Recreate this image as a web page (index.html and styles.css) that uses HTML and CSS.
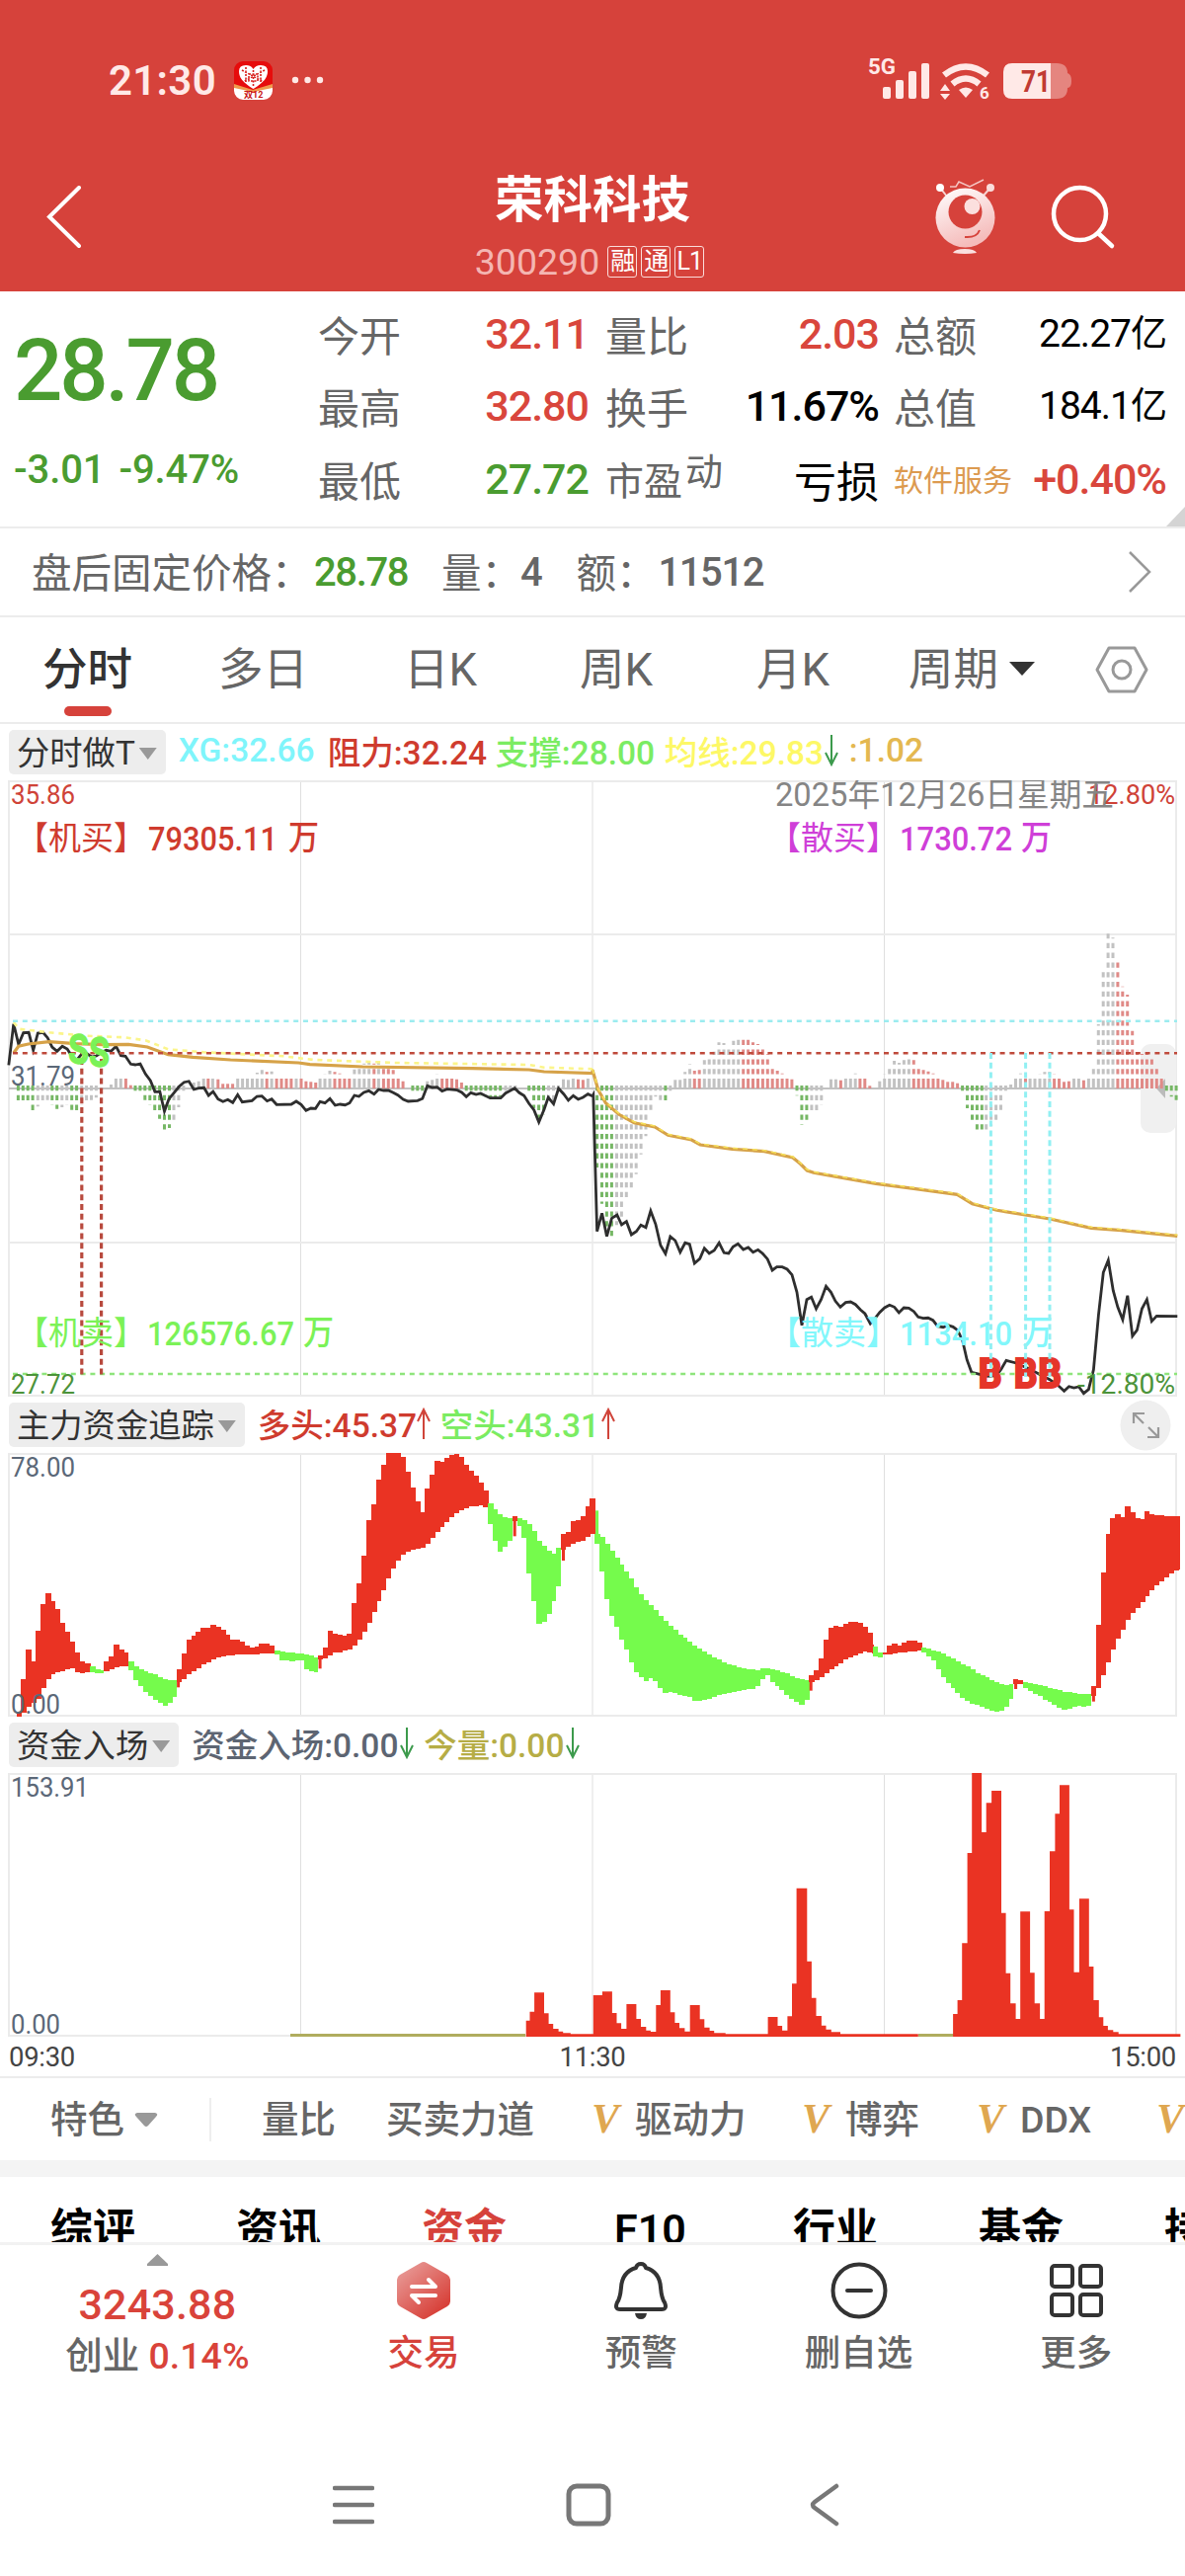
FILE: index.html
```html
<!DOCTYPE html>
<html lang="zh-CN">
<head>
    <meta charset="UTF-8">
    <meta name="viewport" content="width=device-width, initial-scale=1.0">
    <title>荣科科技 300290</title>
    <link rel="stylesheet" href="styles.css">
</head>
<body>
    <header>
        <div class="status">
            <span class="clock">21:30</span>
            <svg class="app" width="39" height="39" viewBox="0 0 39 39">
                <rect width="39" height="39" rx="9" fill="#e60c0c"/>
                <path d="M0 24l19 8 20-8v6a9 9 0 0 1-9 9H9a9 9 0 0 1-9-9z" fill="#fff"/>
                <path d="M0 23l19 6 20-6v4l-20 4-19-4z" fill="#f09a4c"/>
                <path d="M19.500 28C8 21 5 16 5 10q0-6 7-6 5 0 7.500 4Q22 4 27 4q7 0 7 6c0 6-3 11-14.500 18z" fill="#fff"/>
                <path d="M8 9l22 12M31 9L9 21M12 6v15M27 6v15M19.500 9v17M15 13h9v7h-9z" stroke="#d8201c" stroke-width="1.600" stroke-dasharray="2 1.500" fill="none"/>
                <text x="10" y="37" font-size="9" font-weight="700" fill="#c81414">双12</text>
            </svg>
            <svg class="more" width="34" height="8" viewBox="0 0 34 8" fill="#ffe9e7"><circle cx="4" cy="4" r="3.200"/><circle cx="16.500" cy="4" r="3.200"/><circle cx="29" cy="4" r="3.200"/></svg>
            <svg class="signal" width="208" height="46" viewBox="878 56 208 46" fill="#ffe9e7">
                <text x="879" y="74" font-size="22" font-weight="700" textLength="28" lengthAdjust="spacingAndGlyphs">5G</text>
                <rect x="894" y="87" width="8" height="12" rx="2"/>
                <rect x="907" y="80" width="8" height="19" rx="2"/>
                <rect x="920" y="71" width="8" height="28" rx="2"/>
                <rect x="933" y="63" width="8" height="36" rx="2"/>
                <path d="M956 75q22-17 44 0M964.500 84q13.500-11 27 0" fill="none" stroke="#ffe9e7" stroke-width="6.500"/>
                <path d="M978 98l-7-8q7-5 14 0z"/>
                <path d="M957 84l5 7h-10zM957 100l-5-6h10z"/>
                <text x="992" y="99" font-size="17" font-weight="700">6</text>
                <path d="M1016 72q0-9 9-9h39v36h-39q-9 0-9-9z"/>
                <path d="M1064 63h6q11 0 11 10 4 1 4 8t-4 7q0 11-11 11h-6z" fill="#e5857f"/>
                <text x="1034" y="92" font-size="31" font-weight="700" fill="#c13a33" textLength="30" lengthAdjust="spacingAndGlyphs">71</text>
            </svg>
        </div>
        <div class="title">
            <svg class="back" width="36" height="64" viewBox="0 0 36 64"><path d="M33 2L3 31.500 33 61" fill="none" stroke="#fff" stroke-width="4" stroke-linecap="round"/></svg>
            <div class="name">
                <h1>荣科科技</h1>
                <p><span class="code">300290</span><i>融</i><i>通</i><i>L1</i></p>
            </div>
            <svg class="robot" width="62" height="78" viewBox="946 180 62 78">
                <defs><linearGradient id="face" x1="0" y1="0" x2=".4" y2="1"><stop offset="0" stop-color="#fff"/><stop offset="1" stop-color="#f5bcbb"/></linearGradient></defs>
                <path d="M952 190l7 9M1003 190l-8 9" stroke="#f8d5d3" stroke-width="2"/>
                <circle cx="952" cy="190" r="4" fill="#fff"/><circle cx="1003" cy="190" r="4" fill="#fadddc"/>
                <path d="M962 189h6l3-5 11 5 14-7" fill="none" stroke="#f5c4c1" stroke-width="1.500"/>
                <circle cx="977.500" cy="220.500" r="30" fill="url(#face)"/>
                <circle cx="977.500" cy="214.500" r="17" fill="#d6423b"/>
                <circle cx="984.500" cy="209" r="8" fill="#fbdfde"/>
                <path d="M977 240q12 1 15-7" fill="none" stroke="#d6423b" stroke-width="2"/>
                <path d="M965 256q2-4 12-4t12 4q-12 2-24 0z" fill="#fae0df"/>
            </svg>
            <svg class="search" width="66" height="66" viewBox="1064 187 66 66" fill="none" stroke="#fff" stroke-width="4.500" stroke-linecap="round"><circle cx="1093.500" cy="216.500" r="26.500"/><path d="M1112 236l14 13"/></svg>
        </div>
    </header>

    <section class="quote">
        <div class="price">
            <strong>28.78</strong>
            <p><span>-3.01</span><span>-9.47%</span></p>
        </div>
        <div class="stats">
            <label>今开</label><b class="red">32.11</b><label>量比</label><b class="red">2.03</b><label>总额</label><b class="sm">22.27<i>亿</i></b>
            <label>最高</label><b class="red">32.80</b><label>换手</label><b>11.67%</b><label>总值</label><b class="sm">184.1<i>亿</i></b>
            <label>最低</label><b class="green">27.72</b><label class="pe">市盈<sup>动</sup></label><b class="cn">亏损</b><label class="sector">软件服务</label><b class="red">+0.40%</b>
        </div>
        <svg class="corner" width="19" height="20" viewBox="0 0 19 20"><path d="M19 0v20H0z" fill="#d4d4d4"/></svg>
    </section>

    <section class="after">
        <span class="lead">盘后固定价格：</span><b class="green">28.78</b>
        <span class="vol">量：</span><b>4</b>
        <span class="amt">额：</span><b>11512</b>
        <svg width="24" height="44" viewBox="0 0 24 44"><path d="M2 2l20 20L2 42" fill="none" stroke="#999" stroke-width="2.500"/></svg>
    </section>

    <nav class="periods">
        <a class="on">分时</a><a>多日</a><a>日K</a><a>周K</a><a>月K</a><a>周期<svg width="26" height="14" viewBox="0 0 26 14"><path d="M0 0h26L13 14z" fill="#333"/></svg></a>
        <svg class="gear" width="54" height="48" viewBox="0 0 54 48" fill="none" stroke="#999" stroke-width="3"><path d="M14 2h26l12 22-12 22H14L2 24z" stroke-linejoin="round"/><circle cx="27" cy="24" r="9"/></svg>
    </nav>

    <div class="indicator first">
        <span class="chip">分时做T<i></i></span>
        <span class="cyan w1">XG:32.66</span><span class="crimson w2">阻力:32.24</span><span class="lime w3">支撑:28.00</span><span class="yellow w4">均线:29.83</span><svg class="down" viewBox="0 0 14 32"><path d="M7 0v30M1 18l6 12 6-12"/></svg><span class="gold w5">:1.02</span>
    </div>
    <svg class="chart" id="price" width="1200" height="624" viewBox="0 790 1200 624"></svg>

    <div class="indicator">
        <span class="chip">主力资金追踪<i></i></span>
        <span class="crimson w6">多头:45.37</span><svg class="up" viewBox="0 0 14 32"><path d="M7 32V2M1 14L7 2l6 12"/></svg><span class="lime w7">空头:43.31</span><svg class="up" viewBox="0 0 14 32"><path d="M7 32V2M1 14L7 2l6 12"/></svg>
        <svg class="expand" width="52" height="52" viewBox="0 0 52 52"><circle cx="26" cy="26" r="25.500" fill="#efefef"/><path d="M14 24V14h11M14 14l10 10M39 28v10H28M39 38L29 28" fill="none" stroke="#999" stroke-width="2.200"/></svg>
    </div>
    <svg class="chart" id="funds" width="1200" height="267" viewBox="0 1471 1200 267"></svg>

    <div class="indicator">
        <span class="chip">资金入场<i></i></span>
        <span class="slate w8">资金入场:0.00</span><svg class="down" viewBox="0 0 14 32"><path d="M7 0v30M1 18l6 12 6-12"/></svg><span class="olive w9">今量:0.00</span><svg class="down" viewBox="0 0 14 32"><path d="M7 0v30M1 18l6 12 6-12"/></svg>
    </div>
    <svg class="chart" id="inflow" width="1200" height="267" viewBox="0 1795 1200 267"></svg>
    <div class="axis"><span>09:30</span><span>11:30</span><span>15:00</span></div>

    <div class="features">
        <span class="pick">特色<svg width="24" height="14" viewBox="0 0 24 14"><path d="M3 0h18q4 1 1 4l-8 9q-2 2-4 0L2 4Q-1 1 3 0z" fill="#999"/></svg></span>
        <span class="f1">量比</span><span class="f2">买卖力道</span>
        <span class="f3"><em>V</em>驱动力</span><span class="f4"><em>V</em>博弈</span><span class="f5"><em>V</em>DDX</span><span class="f6"><em>V</em></span>
    </div>

    <nav class="sections">
        <a>综评</a><a>资讯</a><a class="on">资金</a><a>F10</a><a>行业</a><a>基金</a><a>持仓</a>
    </nav>

    <footer>
        <div class="index">
            <svg width="21" height="12" viewBox="0 0 21 12"><path d="M10.500 0L21 10v2H0v-2z" fill="#999"/></svg>
            <strong>3243.88</strong>
            <p>创业 <b>0.14%</b></p>
        </div>
        <div class="action trade">
            <svg width="60" height="60" viewBox="0 0 60 60">
                <defs><linearGradient id="hex" x1="0" y1="0" x2=".8" y2="1"><stop offset="0" stop-color="#eaa5a2"/><stop offset="1" stop-color="#d6372f"/></linearGradient></defs>
                <path d="M27 2q3-2 6 0l21 12q3 2 3 5v22q0 3-3 5L33 58q-3 2-6 0L6 46q-3-2-3-5V19q0-3 3-5z" fill="url(#hex)"/>
                <path d="M18 26h24L35 19M42 35H18l7 7" fill="none" stroke="#fff" stroke-width="4" stroke-linecap="round" stroke-linejoin="round"/>
            </svg>
            <span>交易</span>
        </div>
        <div class="action">
            <svg width="60" height="60" viewBox="0 0 60 60" fill="none" stroke="#333" stroke-width="4" stroke-linejoin="round">
                <path d="M30 3q-4 0-5 4-14 4-15 20-1 11-4 15-3 7 3 7h42q6 0 3-7-3-4-4-15Q49 11 35 7q-1-4-5-4z"/><path d="M24 53h12q-1 6-6 6t-6-6z" fill="#333" stroke="none"/>
            </svg>
            <span>预警</span>
        </div>
        <div class="action">
            <svg width="60" height="60" viewBox="0 0 60 60" fill="none" stroke="#333" stroke-width="4" stroke-linecap="round"><circle cx="30" cy="30" r="26.500"/><path d="M18 30h24"/></svg>
            <span>删自选</span>
        </div>
        <div class="action">
            <svg width="60" height="60" viewBox="0 0 60 60" fill="none" stroke="#333" stroke-width="4"><rect x="5" y="5" width="21" height="21" rx="3"/><rect x="34" y="5" width="21" height="21" rx="3"/><rect x="5" y="34" width="21" height="21" rx="3"/><rect x="34" y="34" width="21" height="21" rx="3"/></svg>
            <span>更多</span>
        </div>
    </footer>

    <div class="sysnav">
        <svg width="42" height="44" viewBox="0 0 42 44"><path d="M2 5h38M2 22h38M2 39h38" stroke="#777" stroke-width="4.500" stroke-linecap="round"/></svg>
        <svg width="46" height="44" viewBox="0 0 46 44"><rect x="3" y="3" width="40" height="38" rx="8" fill="none" stroke="#777" stroke-width="5"/></svg>
        <svg width="30" height="44" viewBox="0 0 30 44"><path d="M27 3L5 19q-4 3 0 6l22 16" fill="none" stroke="#777" stroke-width="4.500" stroke-linecap="round"/></svg>
    </div>
    <script src="chart.js"></script>
</body>
</html>
```
FILE: styles.css
```css
* {
    box-sizing: border-box;
}
body {
    margin: 0;
    width: 1200px;
    height: 2608px;
    overflow: hidden;
    background: #fff;
    color: #666;
    font-family: Roboto, "Noto Sans CJK SC", sans-serif;
}
svg {
    display: block;
    flex: none;
}
i, em {
    font-style: normal;
}
h1, p {
    margin: 0;
}
.red { color: #d9463c; }
.green { color: #4a9c30; }
.cyan { color: #7ff5fb; }
.crimson { color: #cf3b2e; }
.lime { color: #7bec62; }
.yellow { color: #fdf866; }
.gold { color: #e4b850; }
.slate { color: #5d6572; }
.olive { color: #b6ad46; }

/* header */
header {
    height: 295px;
    background: #d6423b;
    color: #fff;
}
.status {
    display: flex;
    align-items: center;
    height: 162px;
    padding-left: 110px;
}
.clock {
    width: 127px;
    font-size: 42px;
    font-weight: 600;
    color: #ffe9e7;
    letter-spacing: 0.3px;
}
.more {
    margin-left: 19px;
}
.signal {
    margin-left: 549px;
    margin-top: -3px;
}
.title {
    display: flex;
    height: 133px;
    padding-left: 47px;
}
.back {
    margin-top: 26px;
}
.name {
    width: 280px;
    margin-left: 377px;
    text-align: center;
    padding-top: 10px;
}
.name h1 {
    font-size: 49.5px;
    line-height: 62px;
    font-weight: 700;
    margin-left: 0;
}
.name p {
    display: flex;
    justify-content: center;
    align-items: center;
    gap: 4px;
    height: 34px;
    margin: 14px 0 0 -43px;
    width: 360px;
}
.code {
    font-size: 37.5px;
    color: #f4b6b2;
    margin-right: 4px;
}
.name i {
    width: 30px;
    height: 32px;
    border: 1.5px solid #fbdcda;
    border-radius: 3px;
    font-size: 25px;
    line-height: 29px;
    letter-spacing: -1px;
}
.robot {
    margin: 18px 0 0 206px;
}
.search {
    margin: 25px 0 0 56px;
}

/* quote */
.quote {
    position: relative;
    display: flex;
    height: 240px;
    border-bottom: 2px solid #ececec;
}
.price {
    width: 322px;
    padding-left: 14px;
    color: #4a9c30;
}
.price strong {
    display: block;
    font-size: 87px;
    line-height: 100px;
    font-weight: 500;
    letter-spacing: -3.2px;
    margin-top: 30px;
}
.price p {
    display: flex;
    gap: 14px;
    margin-top: 27px;
    font-size: 40px;
    line-height: 48px;
    font-weight: 500;
    letter-spacing: -0.1px;
}
.stats {
    display: grid;
    grid-template-columns: 90px 184px 17px 90px 187px 15px 120px 156px;
    grid-template-rows: repeat(3, 73.5px);
    align-items: center;
    padding-top: 6px;
    font-size: 42px;
}
.stats label {
    margin-top: -1px;
}
.stats label:nth-of-type(3n+2) { grid-column: 4; }
.stats label:nth-of-type(3n) { grid-column: 7; }
.stats b {
    font-weight: 500;
    font-size: 43px;
    letter-spacing: -1px;
    text-align: right;
    white-space: nowrap;
}
.stats b:not(.red):not(.green) { color: #000; }
.stats b.sm {
    font-size: 39px;
    font-weight: 400;
}
.stats .sm i {
    font-size: 37px;
    line-height: 1;
}
.stats .cn {
    font-weight: 400;
    font-size: 43px;
    letter-spacing: 0;
}
.stats .pe {
    font-size: 39px;
    white-space: nowrap;
}
.pe sup {
    position: relative;
    top: -10px;
    font-size: 38px;
    line-height: 1;
    vertical-align: baseline;
    margin-left: 3px;
}
.stats .sector {
    font-size: 30px;
    color: #dc9a50;
    white-space: nowrap;
}
.corner {
    position: absolute;
    right: 0;
    bottom: 0;
}

.after {
    display: flex;
    align-items: center;
    height: 90px;
    padding-left: 32px;
    border-bottom: 2px solid #ececec;
    font-size: 40.5px;
    white-space: nowrap;
}
.after span {
    margin-top: -3px;
}
.after b {
    font-weight: 500;
    font-size: 40px;
    letter-spacing: -1.4px;
}
.after .lead { width: 286px; }
.after .vol { margin-left: 34px; width: 80px; }
.after .amt { margin-left: 35px; width: 83px; }
.after svg { margin-left: auto; margin-right: 34px; }

/* period tabs */
.periods {
    display: flex;
    align-items: center;
    height: 108px;
    border-bottom: 2px solid #ececec;
    font-size: 45.5px;
    padding-left: 43px;
    white-space: nowrap;
}
.periods a {
    position: relative;
    top: -4px;
    width: 178px;
}
.periods a:nth-of-type(2) { width: 188px; }
.periods a:nth-of-type(3) { width: 178px; }
.periods a:nth-of-type(4) { width: 179px; }
.periods a:nth-of-type(5) { width: 154px; }
.periods a:nth-of-type(6) {
    display: flex;
    align-items: center;
    gap: 11px;
    width: 189px;
}
.periods a svg { margin-top: 5px; }
.periods .on {
    color: #333;
    font-weight: 500;
}
.periods .on::after {
    content: "";
    position: absolute;
    left: 22px;
    bottom: -18px;
    width: 48px;
    height: 10px;
    border-radius: 5px;
    background: #d6423b;
}

/* indicator rows */
.indicator {
    display: flex;
    align-items: center;
    height: 57px;
    padding-left: 9px;
    font-size: 33.5px;
    font-weight: 500;
    white-space: nowrap;
}
.indicator > span:not(.chip) {
    margin-top: -5px;
}
.chip {
    display: flex;
    align-items: center;
    height: 45px;
    padding: 0 9px 5px 8px;
    margin: 0 13px 0 0;
    border-radius: 5px;
    background: #ededed;
    color: #333;
    font-size: 33.3px;
    font-weight: 400;
}
.chip i {
    width: 18px;
    height: 12px;
    margin: 8px 0 0 4px;
    background: #999;
    clip-path: polygon(0 0, 100% 0, 50% 100%);
}
.first .w1 { width: 151px; }
.first .w2 { width: 170px; }
.first .w3 { width: 171px; }
.first .w4 { width: 162px; }
.first .w5 { margin-left: 11px; }
.w6 { width: 161px; }
.w7 { width: 163px; margin-left: 10px; }
.w8 { width: 211px; margin-left: 0; }
.w9 { width: 144px; margin-left: 10px; }
.up, .down {
    width: 14px;
    height: 32px;
    margin-top: -3px;
    fill: none;
    stroke: #d0443a;
    stroke-width: 2;
}
.down { stroke: #3c9a4c; }
.expand { margin-left: auto; margin-right: 14px; }
.axis {
    display: flex;
    justify-content: space-between;
    height: 42px;
    padding: 4px 9px;
    border-bottom: 2px solid #ececec;
    font-size: 27.5px;
    letter-spacing: -0.3px;
    color: #444;
}
.chart text { font-size: 28px; }
.chart .big { font-size: 33px; }
.chart .mid { font-size: 34px; font-weight: 500; }
.chart .mark { font-size: 38px; }

/* features */
.features {
    display: flex;
    align-items: center;
    height: 83px;
    font-size: 37.5px;
    font-weight: 500;
    padding-left: 51px;
    white-space: nowrap;
    overflow: hidden;
}
.features span {
    flex: none;
    line-height: 46px;
}
.features em {
    display: inline-block;
    width: 44px;
    font-family: "Liberation Serif", serif;
    font-size: 42px;
    line-height: 1;
    font-style: italic;
    font-weight: 700;
    color: #dfa750;
}
.pick {
    display: flex;
    align-items: center;
    gap: 10px;
    width: 163px;
    height: 44px;
    border-right: 2px solid #eee;
    margin-right: 51px;
}
.f1 { width: 126px; }
.f2 { width: 208px; }
.f3 { width: 213px; }
.f4 { width: 177px; }
.f5 { width: 182px; }

.sections {
    display: flex;
    height: 83px;
    padding: 25px 0 0 51px;
    border-top: 17px solid #f4f4f4;
    overflow: hidden;
    color: #000;
    font-size: 43px;
    line-height: 56px;
    font-weight: 600;
    white-space: nowrap;
}
.sections a {
    flex: none;
    width: 188px;
}
.sections a:nth-child(4) { padding-left: 7px; }
.sections .on { color: #d6423b; }

/* bottom bar */
footer {
    display: flex;
    position: relative;
    height: 148px;
    border-top: 3px solid #f2f2f2;
    background: #fff;
}
.index {
    width: 319px;
    padding-top: 9px;
    text-align: center;
}
.index svg { margin: 0 auto; }
.index strong {
    display: block;
    font-size: 43px;
    line-height: 50px;
    font-weight: 500;
    color: #d9433a;
    margin-top: 14px;
    letter-spacing: 0.2px;
}
.index p {
    font-size: 37.5px;
    line-height: 54px;
    white-space: nowrap;
    font-weight: 500;
}
.index b {
    color: #d9433a;
    font-weight: 500;
}
.action {
    width: 220.5px;
    padding-top: 16px;
    text-align: center;
    font-size: 36.5px;
    line-height: 52px;
    font-weight: 500;
}
.action svg { margin: 0 auto; }
.action span {
    display: block;
    margin-top: 8px;
}
.trade { color: #d6423b; }

.sysnav {
    display: flex;
    align-items: center;
    padding: 96px 0 0 337px;
}
.sysnav svg:nth-child(2) { margin-left: 194px; }
.sysnav svg:nth-child(3) { margin-left: 201px; }
```
FILE: chart.js
```javascript
// Session halves: each is 600px wide and its samples are stored 1568 units across
const UX = 600 / 1568;
const STEP = 12.87; // one minute
const GRID = '#dfdfdf', RED = '#ea3323', GREEN = '#75fb4c';

function px(half, x) { return (half * 600 + x * UX).toFixed(1); }

function line(half, top, pts) {
    return pts.map(p => px(half, p[0]) + ',' + (top + p[1] / 3).toFixed(1)).join(' ');
}

function frame(top, bottom, rows) {
    let s = '';
    [304.5, 600, 895.5].forEach(x => s += `<path d="M${x} ${top}V${bottom}" stroke="${GRID}" stroke-width="1"/>`);
    rows.forEach(y => s += `<path d="M9 ${y}H1191" stroke="#ebebeb" stroke-width="2"/>`);
    return s + `<rect x="9" y="${top + 1}" width="1182" height="${bottom - top - 2}" fill="none" stroke="#ebebeb" stroke-width="2"/>`;
}

function label(x, y, w, color, text, cls) {
    return `<text x="${x}" y="${y}" fill="${color}" textLength="${w}" lengthAdjust="spacingAndGlyphs" class="${cls || ''}">${text}</text>`;
}

// ---------- price ----------
const am = [[23,475],[36,350],[49,412],[62,377],[76,376],[88,430],[100,378],[114,376],[126,392],[138,420],[151,433],[165,418],[178,426],[190,448],[203,460],[217,440],[230,440],[242,450],[255,447],[268,437],[281,430],[294,433],[307,418],[320,446],[332,448],[346,472],[358,474],[371,471],[385,502],[398,522],[410,556],[423,556],[435,615],[447,578],[460,560],[474,540],[487,527],[500,524],[513,549],[526,545],[540,544],[552,567],[564,555],[577,578],[590,586],[603,580],[616,589],[629,565],[641,587],[667,583],[680,570],[693,569],[707,584],[719,578],[732,595],[771,594],[784,585],[797,595],[810,613],[823,606],[835,607],[847,586],[860,590],[873,577],[887,597],[900,594],[913,596],[925,590],[938,567],[950,570],[963,558],[976,553],[990,563],[1002,549],[1015,552],[1028,552],[1041,559],[1053,566],[1067,579],[1080,585],[1105,583],[1118,577],[1131,538],[1144,543],[1157,542],[1170,554],[1183,548],[1210,551],[1222,558],[1234,571],[1246,559],[1260,564],[1272,561],[1297,575],[1325,575],[1338,560],[1350,553],[1362,545],[1374,559],[1387,568],[1400,592],[1413,611],[1426,648],[1440,610],[1451,573],[1465,593],[1478,546],[1492,563],[1504,582],[1517,568],[1530,579],[1543,573],[1556,563],[1568,569]];
const pm = [[2,565],[12,980],[25,925],[38,995],[51,940],[65,930],[77,960],[90,950],[103,990],[116,980],[128,961],[141,968],[154,918],[167,958],[180,1022],[193,1048],[206,996],[219,1008],[232,1043],[245,1015],[257,1019],[270,1077],[284,1063],[296,1031],[309,1047],[322,1038],[335,1015],[348,1045],[360,1047],[372,1027],[385,1018],[399,1035],[412,1029],[425,1043],[438,1036],[450,1047],[463,1064],[476,1098],[488,1088],[502,1088],[515,1095],[528,1112],[541,1165],[554,1265],[567,1187],[579,1180],[592,1215],[605,1187],[618,1147],[631,1165],[643,1192],[656,1210],[670,1196],[683,1194],[696,1202],[709,1218],[721,1230],[735,1260],[747,1245],[760,1226],[773,1212],[786,1204],[799,1210],[811,1227],[824,1212],[837,1213],[850,1223],[862,1240],[875,1244],[888,1243],[901,1250],[913,1268],[928,1271],[941,1265],[954,1270],[966,1280],[979,1310],[991,1370],[1003,1408],[1017,1412],[1044,1420],[1069,1418],[1082,1398],[1095,1372],[1121,1380],[1160,1400],[1210,1430],[1234,1450],[1248,1465],[1261,1451],[1274,1455],[1287,1452],[1300,1472],[1313,1460],[1326,1400],[1339,1235],[1352,1105],[1365,1068],[1378,1160],[1390,1210],[1403,1248],[1416,1175],[1429,1298],[1441,1280],[1454,1215],[1467,1187],[1480,1253],[1493,1237],[1548,1238]];
const avgAm = [[36,438],[49,418],[75,411],[130,404],[200,410],[270,413],[340,412],[390,420],[445,443],[510,451],[610,459],[790,468],[820,473],[960,480],[1250,485],[1400,489],[1440,495],[1568,500]];
const avgPm = [[0,490],[15,550],[35,590],[70,625],[110,650],[165,663],[200,688],[262,702],[285,717],[370,730],[455,737],[530,756],[550,775],[568,795],[585,802],[650,815],[750,835],[850,850],[965,868],[1005,896],[1070,916],[1210,942],[1320,970],[1400,977],[1548,994]];
const maAm = [[36,345],[50,365],[130,376],[230,386],[330,391],[385,400],[445,427],[540,436],[750,448],[830,459],[1050,468],[1400,474],[1440,482],[1568,487]];

// momentum bars: half, first x, colour, heights per minute
const G = '#76b765', S = '#c2c2c2', R = '#e08a87';
const bars = [
    [0,48,G,[-42,-42,-42,-75]],[0,100,S,[-55,-40,-35]],[0,138,G,[-50,-62]],[0,164,S,[-57,-50]],[0,190,G,[-65,-72]],[0,216,S,[-50,-42,-35,-28]],
    [0,294,S,[12,40,30]],[0,333,R,[30,10]],[0,358,G,[-14,-17,-35,-50,-78,-92,-133,-120]],[0,460,S,[-98,-57,-20]],
    [0,513,S,[18,22,40]],[0,551,R,[38]],[0,563,S,[35]],[0,577,R,[28,14,14,14]],[0,629,S,[32,30,32,34,48,56]],[0,706,R,[50]],[0,719,S,[52]],
    [0,732,R,[42,36,32,32]],[0,784,S,[30]],[0,797,R,[36,22,20,18]],[0,847,S,[36,44,54]],[0,886,R,[50,46,42,42]],[0,938,S,[58,70,76,78]],
    [0,990,R,[76]],[0,1002,S,[78]],[0,1015,R,[70,70,56,40,22]],[0,1092,G,[-12,-14,-15]],[0,1131,S,[22,26,44]],[0,1170,R,[34,33,33,28,18]],
    [0,1234,G,[-14,-16,-20,-22,-25,-26,-28,-24]],[0,1338,S,[-18,-14,-12]],[0,1400,G,[-20,-60,-90,-80]],[0,1452,S,[-45,-40,-15]],
    [0,1491,S,[28,26,30]],[0,1530,R,[28,26]],[0,1556,S,[30]],
    [1,12,G,[-240,-350,-455,-455]],[1,64,S,[-415,-390,-340,-310,-260,-200,-145,-65,-25,-35]],[1,193,G,[-45]],[1,206,S,[-8]],[1,219,S,[26,26,50,74]],
    [1,270,R,[54,56]],[1,296,S,[86,96,112,140,138,130,145,158]],[1,399,R,[153,153,140,135,128,104,68,54,46,38,28]],[1,541,G,[-22,-110,-98]],
    [1,580,S,[-78,-78,-50]],[1,631,S,[28,28]],[1,657,R,[25]],[1,670,S,[36,42,46]],[1,708,R,[42,32,8]],[1,760,S,[22,44,72,84,78,86,92]],
    [1,850,R,[86,66,56,52,46,30,26,20,20,16]],[1,979,G,[-14,-60,-108,-136,-138]],[1,1042,S,[-130,-115,-100,-65,-20]],[1,1107,S,[12,40,46]],
    [1,1146,R,[38]],[1,1158,S,[34,40,44,50,50]],[1,1222,R,[44,34,20,22]],[1,1274,S,[30,30]],[1,1300,R,[25]],[1,1313,S,[32,68,195,360,470,458]],
    [1,1390,R,[395,310,285,175,110,105,108,100,60,30]],[1,1519,G,[-14,-25,-35]]
];

function drawPrice() {
    let s = frame(790, 1414, [946, 1258]);
    s += '<path d="M9 1102H1184" stroke="#c2c2c2" stroke-width="2"/>';
    s += '<rect x="1155" y="1057" width="36" height="90" rx="10" fill="#f0f0f0"/><path d="M1180 1092v20l-9-10z" fill="#bbb"/>';
    bars.forEach(b => b[3].forEach((h, i) => {
        const x = px(b[0], b[1] + i * STEP);
        // first dash above the zero line is longer
        const dash = h > 0 ? '10' + ' 4.5 5.3'.repeat(16) + ' 4.5' : '5.3 4.5';
        s += `<path d="M${x} ${h > 0 ? 1102 : 1099}V${(1102 - h / 3).toFixed(1)}" stroke="${b[2]}" stroke-width="3" stroke-dasharray="${dash}"/>`;
    }));
    s += `<polyline points="${line(0, 920, am)} ${line(1, 920, pm)}" fill="none" stroke="#2e2e2e" stroke-width="2.8"/>`;
    s += `<polyline points="${line(0, 920, avgAm)} ${line(1, 920, avgPm)}" fill="none" stroke="#d6a248" stroke-width="3.2"/>`;
    s += `<polyline points="${line(0, 920, maAm)}" fill="none" stroke="#fbf58b" stroke-width="2.6" stroke-dasharray="5 4.8"/>`;
    s += `<polyline points="${line(1, 919, avgPm)}" fill="none" stroke="#f6e05a" stroke-width="1.6" stroke-dasharray="5 4.8"/>`;
    [[1033.7, '#9becef'], [1066.3, '#bf4a3c'], [1391, '#8fe57c']].forEach(r => {
        s += `<path d="M13 ${r[0]}H1192" stroke="${r[1]}" stroke-width="2.6" stroke-dasharray="5 4.8"/>`;
    });
    [82.8, 102.6].forEach(x => s += `<path d="M${x} 1072V1392" stroke="#b84a3e" stroke-width="3.2" stroke-dasharray="6 3.8"/>`);
    // text over the plot
    s += label(11, 814, 65, '#cf4338', '35.86') + label(1102, 814, 88, '#cf4338', '12.80%');
    s += label(785, 816, 343, '#858585', '2025年12月26日星期五', 'big');
    s += label(16, 860, 132, '#cf3b2e', '【机买】', 'big') + label(150, 861, 131, '#cf3b2e', '79305.11', 'mid') + label(292, 860, 31, '#cf3b2e', '万', 'mid');
    s += label(778, 860, 132, '#cf3fd8', '【散买】', 'big') + label(911, 861, 114, '#cf3fd8', '1730.72', 'mid') + label(1034, 860, 31, '#cf3fd8', '万', 'mid');
    s += label(16, 1361, 132, '#7bf257', '【机卖】', 'big') + label(149, 1362, 149, '#7bf257', '126576.67', 'mid') + label(307, 1361, 31, '#7bf257', '万', 'mid');
    s += label(778, 1361, 132, '#82f7fb', '【散卖】', 'big') + label(911, 1362, 114, '#82f7fb', '1134.10', 'mid') + label(1035, 1361, 31, '#82f7fb', '万', 'mid');
    s += label(11, 1099, 65, '#5b6878', '31.79') + label(11, 1411, 65, '#4c933a', '27.72') + label(1091, 1411, 99, '#4c933a', '-12.80%');
    // sell / buy marks
    [[70, 1076], [91, 1079]].forEach(p => s += `<text x="${p[0]}" y="${p[1]}" class="mark" textLength="19" lengthAdjust="spacingAndGlyphs" fill="none" stroke="#7bf257" stroke-width="3.400">S</text>`);
    [991, 1027, 1051.5].forEach(x => s += `<text x="${x}" y="1404" class="mark" font-weight="400" textLength="23" lengthAdjust="spacingAndGlyphs" fill="#d8d0ca" stroke="#e5352a" stroke-width="4">B</text>`);
    [1003.4, 1038.6, 1063].forEach(x => s += `<path d="M${x} 1066V1394" stroke="#92f0f3" stroke-width="3" stroke-dasharray="6 3.8"/>`);
    document.getElementById('price').innerHTML = s;
}

// ---------- fund tracking: half, colour, [x, top, bottom] ----------
const flow = [
    [0,RED,[[43,1003,1013],[56,900,1003],[69,808,985],[82,848,970],[95,750,960],[108,667,925],[120,637,900],[134,665,885],[147,690,880],[160,733,875],[173,760,870],[186,790,868],[200,825,880],[213,850,882],[238,853,876]]],
    [0,GREEN,[[238,862,880],[250,868,883],[262,873,882],[274,875,880]]],
    [0,RED,[[275,845,875],[287,835,870],[300,795,865],[313,810,862],[326,818,862],[340,820,862]]],
    [0,GREEN,[[340,845,872],[352,860,900],[365,870,920],[378,875,938],[390,880,950],[403,885,962],[416,892,970],[430,900,982],[443,903,972],[455,903,955],[467,905,930]]],
    [0,RED,[[467,870,908],[480,822,900],[493,780,885],[506,767,877],[519,755,865],[532,743,853],[545,745,847],[558,735,840],[571,740,834],[584,750,830],[597,765,828],[610,780,827],[623,780,826],[636,788,825],[650,800,824],[664,805,824],[678,798,824],[690,790,822],[703,795,822],[726,800,821]]],
    [0,GREEN,[[727,812,825],[740,817,842],[765,820,845],[795,822,843],[803,824,868],[815,828,876],[828,832,880],[841,835,880]]],
    [0,RED,[[841,828,840],[854,803,838],[867,753,828],[880,762,820],[893,765,818],[906,767,814],[919,760,810],[931,670,798],[944,610,780],[957,523,757],[970,415,727],[983,367,695],[996,290,660],[1009,247,627],[1021,208,593],[1034,208,564],[1047,212,540],[1060,225,522],[1072,267,512],[1085,317,507],[1098,358,504],[1111,395,500],[1124,320,488],[1137,280,472],[1150,237,453],[1163,240,437],[1176,226,422],[1190,218,407],[1202,217,395],[1215,225,385],[1228,250,380],[1240,267,376],[1253,283,374],[1266,303,373],[1279,327,378],[1291,350,380]]],
    [0,GREEN,[[1291,365,430],[1304,385,480],[1317,400,513],[1330,408,497],[1343,412,480],[1356,412,470]]],
    [0,RED,[[1355,406,420],[1368,408,420]]],
    [0,GREEN,[[1368,412,435],[1381,416,470],[1394,430,580],[1407,450,665],[1420,480,735],[1433,497,725],[1446,510,700],[1459,518,660],[1472,500,615],[1482,500,615]]],
    [0,RED,[[1484,460,508],[1497,453,497],[1510,420,490],[1523,417,484],[1536,405,478],[1549,373,468],[1561,350,460],[1574,350,458]]],
    [1,GREEN,[[6,460,488],[18,465,568],[31,487,655],[44,508,705],[57,530,738],[70,550,780],[83,572,810],[96,595,850],[109,620,880],[121,640,892],[134,660,905],[147,675,895],[160,690,905],[173,707,925],[186,722,943],[200,738,938],[225,765,948],[250,785,953],[262,797,965],[280,808,967],[300,825,960],[325,840,948],[350,852,943],[375,862,938],[400,868,930],[425,872,928],[433,872,918],[446,867,897],[459,868,885],[470,870,910],[483,874,920],[496,880,935],[509,883,948],[522,890,960],[535,896,970],[548,900,977],[561,903,962],[573,904,935]]],
    [1,RED,[[573,887,910],[586,873,903],[599,837,895],[612,778,883],[625,743,870],[638,737,860],[651,740,850],[664,732,840],[677,725,832],[690,727,826],[703,730,820],[716,742,817],[729,762,818],[742,800,822]]],
    [1,GREEN,[[742,800,832],[755,818,835],[767,820,830]]],
    [1,RED,[[767,820,826],[780,797,824],[793,792,822],[806,797,820],[819,790,818],[832,783,816],[845,783,815],[858,788,813],[870,797,812]]],
    [1,GREEN,[[870,803,818],[883,808,832],[896,812,842],[909,817,872],[922,822,895],[935,830,912],[948,838,928],[961,846,943],[974,855,957],[987,863,968],[1000,872,975],[1013,882,980],[1026,888,985],[1039,896,990],[1052,903,995],[1065,910,998],[1078,915,995],[1091,917,980],[1104,913,955],[1112,912,930]]],
    [1,RED,[[1112,900,914],[1125,902,914],[1138,905,912]]],
    [1,GREEN,[[1139,908,928],[1152,912,935],[1165,916,945],[1178,918,952],[1191,922,962],[1204,926,970],[1217,930,980],[1230,934,987],[1243,938,992],[1256,940,988],[1269,943,984],[1282,945,982],[1295,945,983],[1308,946,980],[1320,946,980]]],
    [1,RED,[[1319,922,950],[1332,733,925],[1344,583,890],[1357,462,850],[1370,412,812],[1383,400,778],[1396,407,750],[1409,375,720],[1422,393,700],[1435,412,683],[1448,415,664],[1461,390,646],[1474,400,630],[1487,402,614],[1500,403,602],[1513,404,590],[1526,405,578],[1539,406,568],[1552,406,568]]]
];
const spikes = [[0,472,880,925,RED],[0,847,830,868,RED],[0,1362,406,466,RED],[0,1491,480,540,RED],[1,12,388,470,GREEN],[1,578,890,935,RED],[1,1120,905,930,RED],[1,1326,930,968,RED]];

function mix(keys, x) {
    let i = 0;
    while (i < keys.length - 2 && keys[i + 1][0] <= x) i++;
    const a = keys[i], b = keys[i + 1], t = (x - a[0]) / (b[0] - a[0]);
    return [a[1] + (b[1] - a[1]) * t, a[2] + (b[2] - a[2]) * t];
}

function drawFunds() {
    let s = frame(1471, 1738, []) + '<g shape-rendering="crispEdges">';
    flow.forEach(seg => {
        const keys = seg[2], end = keys[keys.length - 1][0];
        for (let x = keys[0][0]; x < end - 1; x += STEP) {
            const v = mix(keys, x), w = Math.min(STEP, end - x) * UX + 0.6;
            s += `<rect x="${px(seg[0], x)}" y="${(1400 + v[0] / 3).toFixed(1)}" width="${w.toFixed(1)}" height="${((v[1] - v[0]) / 3).toFixed(1)}" fill="${seg[1]}"/>`;
        }
    });
    s += '</g>';
    spikes.forEach(p => s += `<path d="M${px(p[0], p[1])} ${1400 + p[2] / 3}V${1400 + p[3] / 3}" stroke="${p[4]}" stroke-width="3"/>`);
    s += label(11, 1495, 65, '#5b6878', '78.00') + label(11, 1735, 50, '#5b6878', '0.00');
    document.getElementById('funds').innerHTML = s;
}

// ---------- inflow: [x, height] steps ----------
const inflow = [
    [[696,917],[701,890],[707,832],[720,895],[726,927],[732,942],[739,950],[745,955],[755,958],[785,840],[797,829],[810,894],[816,925],[822,942],[829,867],[842,912],[848,936],[855,947],[861,951],[868,870],[874,825],[887,892],[893,924],[899,940],[906,950],[913,870],[926,913],[932,938],[939,948],[945,955],[960,958],[1016,906],[1029,933],[1035,947],[1042,904],[1048,805],[1054,515],[1068,737],[1074,848],[1080,903],[1087,932],[1093,944],[1100,952],[1112,958],[1215,958]],
    [[1261,897],[1267,855],[1273,682],[1280,408],[1286,160],[1299,345],[1305,256],[1312,219],[1325,590],[1331,773],[1337,865],[1344,912],[1350,586],[1363,772],[1369,865],[1376,912],[1382,585],[1389,403],[1396,289],[1402,202],[1415,580],[1421,770],[1428,547],[1441,753],[1447,855],[1454,907],[1460,933],[1466,946],[1473,952],[1480,958],[1562,958]]
];

function drawInflow() {
    const k = 1200 / 1568;
    let s = frame(1795, 2062, []);
    s += '<path d="M294 2060.500H532M930 2060.500H966" stroke="#b0ad5e" stroke-width="3"/>';
    inflow.forEach(run => {
        let d = `M${(run[0][0] * k).toFixed(1)} 2062`;
        run.forEach((p, i) => {
            d += `V${(1740 + p[1] / 3).toFixed(1)}`;
            if (run[i + 1]) d += `H${(run[i + 1][0] * k).toFixed(1)}`;
        });
        s += `<path d="${d}V2062Z" fill="${RED}"/>`;
    });
    s += label(11, 1819, 79, '#5b6878', '153.91') + label(11, 2059, 50, '#5b6878', '0.00');
    document.getElementById('inflow').innerHTML = s;
}

drawPrice();
drawFunds();
drawInflow();
```
